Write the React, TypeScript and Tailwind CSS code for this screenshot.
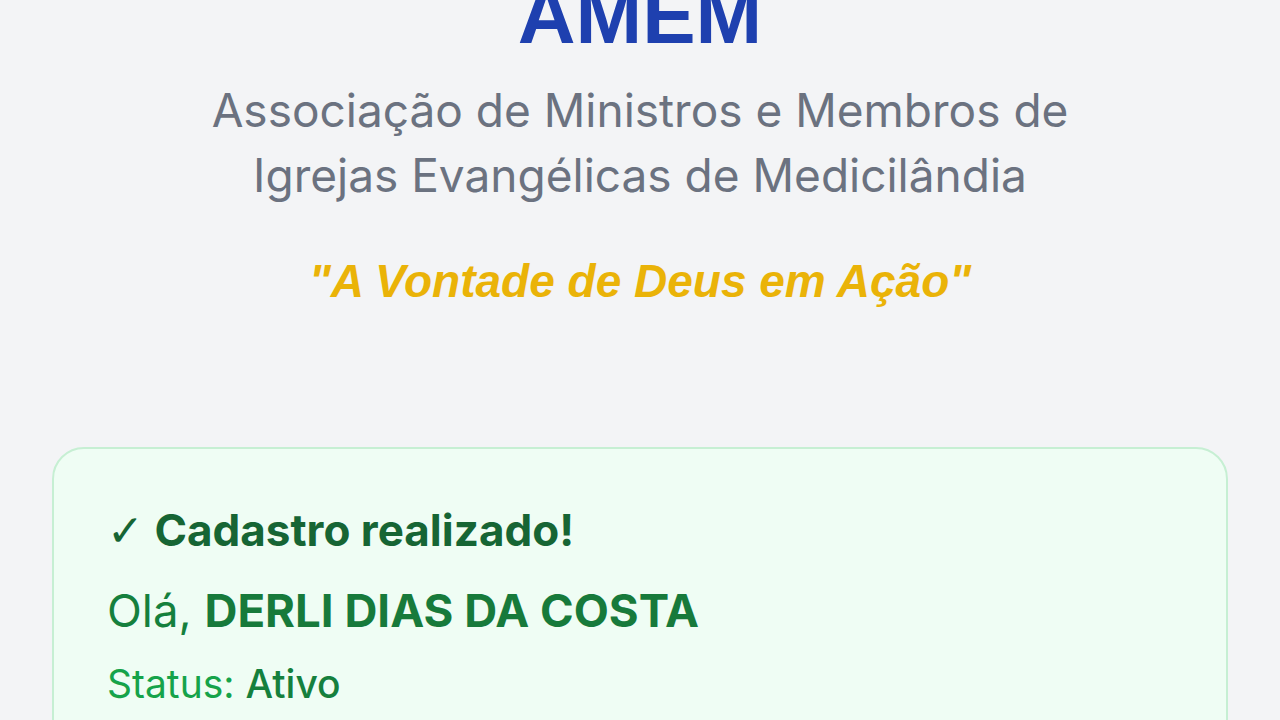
import React from "react";

const sans = { fontFamily: "Inter, 'Noto Sans', sans-serif" };

export default function App() {
  return (
    <div className="min-h-screen bg-[#f3f4f6] overflow-hidden" style={sans}>
      <header className="flex flex-col items-center text-center">
        <h1 className="mt-[-24px] text-[80px] leading-none font-bold text-[#1e40af] font-['Liberation_Sans',Arial,sans-serif]">
          AMEM
        </h1>
        <p className="mt-[22px] text-[46px] leading-[65px] text-[#6b7280]">
          Associação de Ministros e Membros de
          <br />
          Igrejas Evangélicas de Medicilândia
        </p>
        <p className="mt-[45px] text-[46px] leading-[56px] font-bold italic text-[#eab308] font-['Liberation_Sans',Arial,sans-serif]">
          "A Vontade de Deus em Ação"
        </p>
      </header>

      <main className="px-[52px] mt-[138px]">
        <div className="rounded-[32px] border-2 border-[#c6efd3] bg-[#effdf4] px-[53px] pt-[53px] pb-[60px]">
          <h2 className="text-[44px] leading-[56px] font-bold text-[#166534]">
            <span className="font-light font-['DejaVu_Sans',sans-serif]">✓</span> Cadastro realizado!
          </h2>
          <p className="mt-[24px] text-[45.6px] leading-[56px] text-[#15803d]">
            Olá, <span className="font-bold text-[#177a3b]">DERLI DIAS DA COSTA</span>
          </p>
          <p className="mt-[21px] text-[39px] leading-[48px] text-[#16a34a]">
            Status: <span className="font-medium text-[#15803d]">Ativo</span>
          </p>
        </div>
      </main>
    </div>
  );
}
